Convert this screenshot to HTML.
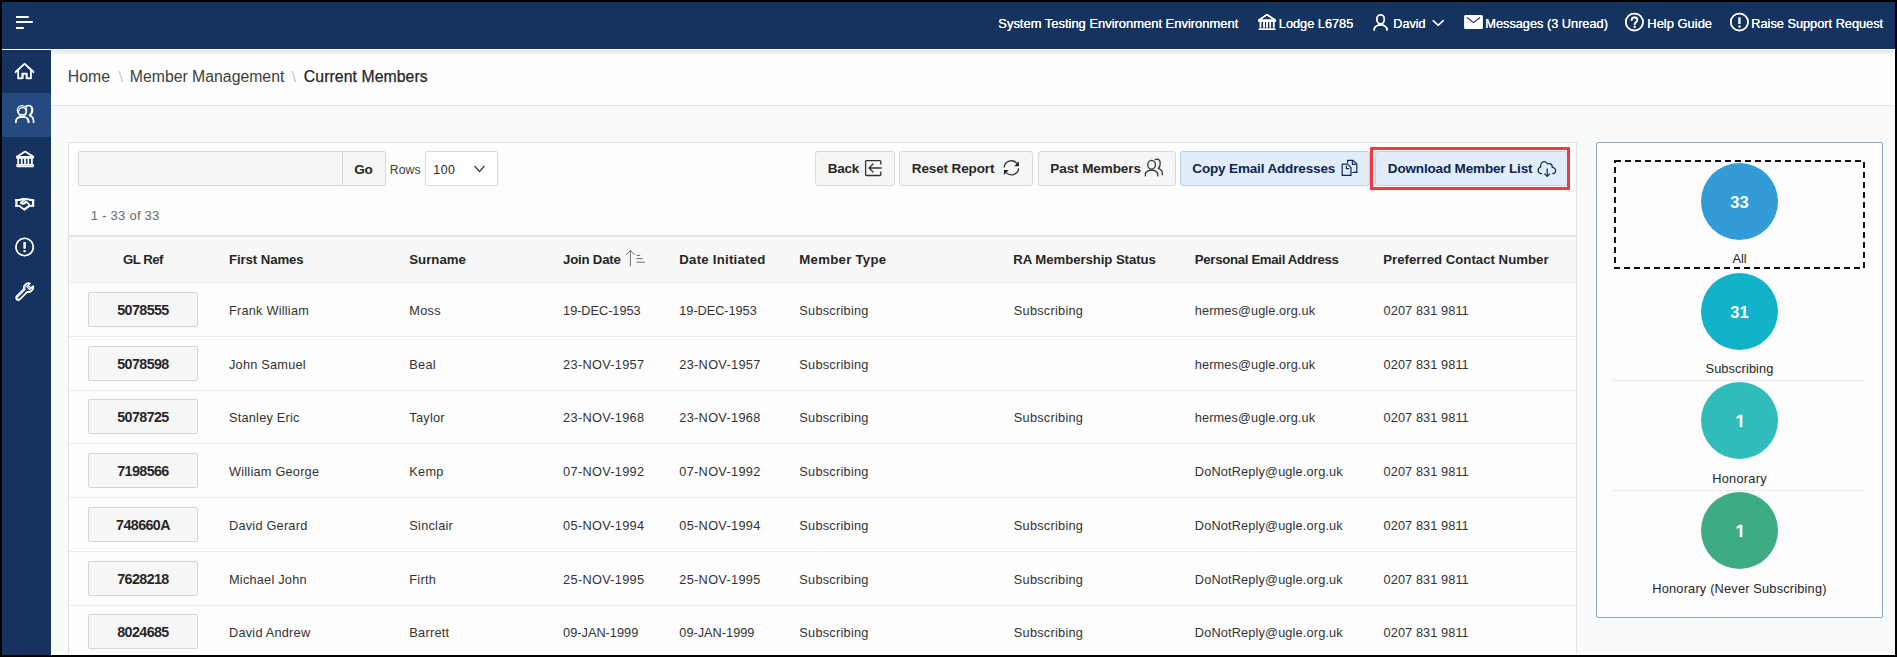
<!DOCTYPE html>
<html><head><meta charset="utf-8"><title>Current Members</title>
<style>
html,body{margin:0;padding:0;}
body{width:1897px;height:657px;position:relative;overflow:hidden;background:#000;font-family:"Liberation Sans",sans-serif;}
.t{position:absolute;line-height:0;white-space:nowrap;}
.r{position:absolute;box-sizing:border-box;}
svg{position:absolute;overflow:visible;}
</style></head><body>
<div class="r" style="left:2px;top:2px;width:1893px;height:653px;background:#f9fafc;"></div>
<div class="r" style="left:2px;top:2px;width:1893px;height:47px;background:#14335e;"></div>
<div class="r" style="left:2px;top:49px;width:1893px;height:1px;background:#ffffff;"></div>
<div class="r" style="left:2px;top:50px;width:49px;height:605px;background:#14335e;"></div>
<div class="r" style="left:2px;top:93px;width:49px;height:44px;background:#244a7f;"></div>
<div class="r" style="left:51px;top:50px;width:1px;height:605px;background:#ffffff;"></div>
<div class="r" style="left:52px;top:50px;width:1843px;height:55px;background:#fefefe;"></div>
<div class="r" style="left:52px;top:50px;width:1843px;height:6px;background:linear-gradient(#e4e5e8,rgba(254,254,254,0));"></div>
<div class="r" style="left:52px;top:105px;width:1843px;height:1px;background:#e4e5e8;"></div>
<svg style="left:0;top:0" width="60" height="40"><g stroke="#fff" stroke-width="2.2" stroke-linecap="round"><line x1="17" y1="17" x2="27.7" y2="17"/><line x1="17" y1="22" x2="31.7" y2="22"/><line x1="17" y1="28" x2="22.7" y2="28"/></g></svg>
<div class="t" style="left:998.3px;top:23.51px;font-size:12.95px;color:#ffffff;">System Testing Environment Environment</div>
<div class="t" style="left:1278.8px;top:23.58px;font-size:12.75px;color:#ffffff;">Lodge L6785</div>
<div class="t" style="left:1393.3px;top:23.63px;font-size:12.6px;color:#ffffff;">David</div>
<div class="t" style="left:1485.3px;top:23.58px;font-size:12.75px;color:#ffffff;">Messages (3 Unread)</div>
<div class="t" style="left:1647.3px;top:23.51px;font-size:12.95px;color:#ffffff;">Help Guide</div>
<div class="t" style="left:1751.3px;top:23.58px;font-size:12.75px;color:#ffffff;">Raise Support Request</div>
<svg style="left:0;top:0" width="1897" height="50"><g fill="none" stroke="#fff" stroke-width="1.5" stroke-linejoin="round" stroke-linecap="round">
<path d="M1258.8 20.2 L1267 14.6 L1275.3 20.2 Z"/>
<line x1="1258.8" y1="21" x2="1275.3" y2="21"/>
<line x1="1260.5" y1="22" x2="1260.5" y2="27"/><line x1="1264" y1="22" x2="1264" y2="27"/><line x1="1267" y1="22" x2="1267" y2="27"/><line x1="1270.3" y1="22" x2="1270.3" y2="27"/><line x1="1273.7" y1="22" x2="1273.7" y2="27"/>
<line x1="1259.3" y1="29.2" x2="1274.8" y2="29.2"/>
<ellipse cx="1380.6" cy="19.3" rx="3.8" ry="4.6"/>
<path d="M1374.3 30 L1374.3 28.8 C1374.3 27.2 1375.6 26.2 1378.2 25.1 L1383 25.1 C1385.6 26.2 1386.9 27.2 1386.9 28.8 L1386.9 30"/>
<path d="M1433.2 20.7 L1438.2 25.3 L1443.2 20.7" stroke-width="1.3"/>
<circle cx="1634.4" cy="22" r="8.6"/>
<circle cx="1739.4" cy="22" r="8.6"/>
</g>
<rect x="1464.3" y="15" width="18.4" height="14" rx="1.5" fill="#fff"/>
<path d="M1467 17.5 L1473.5 22.6 L1480 17.5" fill="none" stroke="#14335e" stroke-width="1.2"/>
<path d="M1631.6 20.2 C1631.6 18.2 1633 17.4 1634.5 17.4 C1636.2 17.4 1637.4 18.5 1637.4 20 C1637.4 22 1634.6 22.2 1634.6 24.6" fill="none" stroke="#fff" stroke-width="1.6" stroke-linecap="round"/>
<circle cx="1634.6" cy="27" r="1" fill="#fff"/>
<rect x="1738.5" y="17.5" width="1.9" height="6.5" fill="#fff"/>
<circle cx="1739.5" cy="26.6" r="1.05" fill="#fff"/>
</svg>
<svg style="left:0;top:0" width="60" height="320"><g fill="none" stroke="#fff" stroke-width="1.35" stroke-linejoin="round" stroke-linecap="round">
<path d="M15.6 71.6 L24.6 63.6 L33.6 71.6"/>
<path d="M18.4 69.4 L18.4 78.2 L23 78.2 L23 73.8 L26.3 73.8 L26.3 78.2 L30.9 78.2 L30.9 69.4"/>
<ellipse cx="22.4" cy="112" rx="3.9" ry="4.5"/>
<path d="M16 122.6 L16 121 C16 119.2 17.6 118 20.2 117.2 L24.8 117.2 C27.4 118 28.8 119.2 28.8 121 L28.8 122.6"/>
<path d="M26 106.6 C26.8 105.9 27.7 105.6 28.6 105.6 C30.7 105.6 31.8 107.7 31.8 110.2 C31.8 112.6 30.8 114.4 29.4 115.6 C31.7 116.6 33.4 117.9 33.4 120.4 L33.4 122.6"/>
<path d="M16.6 156.6 L25.2 151.4 L33.6 156.6 Z"/>
<line x1="18.1" y1="157.6" x2="18.1" y2="163.6"/><line x1="21.5" y1="157.6" x2="21.5" y2="163.6"/><line x1="25.1" y1="157.6" x2="25.1" y2="163.6"/><line x1="28.5" y1="157.6" x2="28.5" y2="163.6"/><line x1="32" y1="157.6" x2="32" y2="163.6"/>
<rect x="17" y="164.6" width="16.4" height="2" rx="0.5"/>
<path d="M15.6 200.4 L20 200.4 L22 198.8 L28 198.8 L30 200.4 L33.8 200.4"/>
<path d="M16.8 200.4 L16.8 205.6 M32.6 200.4 L32.6 205.6"/>
<path d="M15.6 205.8 L19.5 205.8 L24 209.4 L28.5 205.8 L33.8 205.8"/>
<path d="M25.6 199.4 L21.6 202.9 C22.6 204.4 24 204.3 25 203.3 L26.6 201.8 L29.6 204.8"/>
<circle cx="24.6" cy="247" r="8.6"/>
<path d="M30.2 283.3 L26.8 286.6 L29.6 289.4 L33 286 C33.6 289.5 31 293 27 292.3 L20 299.3 C19 300.3 17.5 300.3 16.6 299.4 C15.7 298.5 15.7 297 16.7 296 L23.6 289 C22.9 285 26.5 282.4 30.2 283.3 Z"/>
</g>
<rect x="23.6" y="242" width="2" height="6.5" fill="#fff"/>
<circle cx="24.6" cy="251.2" r="1.1" fill="#fff"/>
</svg>
<div class="r" style="left:52px;top:50px;width:1843px;height:55px;background:#fefefe;"></div>
<div class="r" style="left:52px;top:50px;width:1843px;height:6px;background:linear-gradient(#e4e5e8,rgba(254,254,254,0));"></div>
<div class="r" style="left:52px;top:105px;width:1843px;height:1px;background:#e4e5e8;"></div>
<svg style="left:0;top:0" width="60" height="40"><g stroke="#fff" stroke-width="2.2" stroke-linecap="round"><line x1="17" y1="17" x2="27.7" y2="17"/><line x1="17" y1="22" x2="31.7" y2="22"/><line x1="17" y1="28" x2="22.7" y2="28"/></g></svg>
<div class="t" style="left:998.3px;top:23.51px;font-size:12.95px;color:#ffffff;">System Testing Environment Environment</div>
<div class="t" style="left:1278.8px;top:23.58px;font-size:12.75px;color:#ffffff;">Lodge L6785</div>
<div class="t" style="left:1393.3px;top:23.63px;font-size:12.6px;color:#ffffff;">David</div>
<div class="t" style="left:1485.3px;top:23.58px;font-size:12.75px;color:#ffffff;">Messages (3 Unread)</div>
<div class="t" style="left:1647.3px;top:23.51px;font-size:12.95px;color:#ffffff;">Help Guide</div>
<div class="t" style="left:1751.3px;top:23.58px;font-size:12.75px;color:#ffffff;">Raise Support Request</div>
<svg style="left:0;top:0" width="1897" height="50"><g fill="none" stroke="#fff" stroke-width="1.5" stroke-linejoin="round" stroke-linecap="round">
<path d="M1258.8 20.2 L1267 14.6 L1275.3 20.2 Z"/>
<line x1="1258.8" y1="21" x2="1275.3" y2="21"/>
<line x1="1260.5" y1="22" x2="1260.5" y2="27"/><line x1="1264" y1="22" x2="1264" y2="27"/><line x1="1267" y1="22" x2="1267" y2="27"/><line x1="1270.3" y1="22" x2="1270.3" y2="27"/><line x1="1273.7" y1="22" x2="1273.7" y2="27"/>
<line x1="1259.3" y1="29.2" x2="1274.8" y2="29.2"/>
<ellipse cx="1380.6" cy="19.3" rx="3.8" ry="4.6"/>
<path d="M1374.3 30 L1374.3 28.8 C1374.3 27.2 1375.6 26.2 1378.2 25.1 L1383 25.1 C1385.6 26.2 1386.9 27.2 1386.9 28.8 L1386.9 30"/>
<path d="M1433.2 20.7 L1438.2 25.3 L1443.2 20.7" stroke-width="1.3"/>
<circle cx="1634.4" cy="22" r="8.6"/>
<circle cx="1739.4" cy="22" r="8.6"/>
</g>
<rect x="1464.3" y="15" width="18.4" height="14" rx="1.5" fill="#fff"/>
<path d="M1467 17.5 L1473.5 22.6 L1480 17.5" fill="none" stroke="#14335e" stroke-width="1.2"/>
<path d="M1631.6 20.2 C1631.6 18.2 1633 17.4 1634.5 17.4 C1636.2 17.4 1637.4 18.5 1637.4 20 C1637.4 22 1634.6 22.2 1634.6 24.6" fill="none" stroke="#fff" stroke-width="1.6" stroke-linecap="round"/>
<circle cx="1634.6" cy="27" r="1" fill="#fff"/>
<rect x="1738.5" y="17.5" width="1.9" height="6.5" fill="#fff"/>
<circle cx="1739.5" cy="26.6" r="1.05" fill="#fff"/>
</svg>
<svg style="left:0;top:0" width="60" height="320"><g fill="none" stroke="#fff" stroke-width="1.35" stroke-linejoin="round" stroke-linecap="round">
<path d="M15.5 72.5 L24.5 64 L33.5 72.5"/>
<path d="M18 70.5 L18 78.5 L22 78.5 L22 73.5 L27 73.5 L27 78.5 L31 78.5 L31 70.5"/>
<circle cx="22" cy="110.2" r="4.6"/>
<path d="M15.8 122.3 C15.8 118.3 18.5 116.3 22 116.3 C25.5 116.3 28.2 118.3 28.2 122.3"/>
<path d="M26.5 106.1 C27.2 105.6 27.8 105.4 28.6 105.4 C31.2 105.4 32.7 107.6 32.7 110 C32.7 112.3 31.4 114.2 29.6 114.8 C31.8 115.6 33.8 117.8 33.8 122.3"/>
<path d="M16.8 157 L25 151.6 L33.2 157 Z"/>
<line x1="16.8" y1="158" x2="33.2" y2="158"/>
<line x1="18.4" y1="159" x2="18.4" y2="164"/><line x1="21.8" y1="159" x2="21.8" y2="164"/><line x1="25" y1="159" x2="25" y2="164"/><line x1="28.2" y1="159" x2="28.2" y2="164"/><line x1="31.6" y1="159" x2="31.6" y2="164"/>
<line x1="17.2" y1="166" x2="32.8" y2="166"/>
<path d="M15.5 200 L20 199.5 L24 198.5 L26 199.5 L30 199.5 L33.5 200"/>
<path d="M16 200 L16 206 M33.5 200 L33.5 206"/>
<path d="M16 206 L19 206 L24.5 210 L30 206 L33.5 206"/>
<path d="M24 198.8 L20.5 203 C21.5 204 22.8 204 24 203 L26 201.5 L29.5 205"/>
<circle cx="24.6" cy="247" r="8.8"/>
<path d="M16.5 298 L25 289.5 C24 286.5 25.5 283.5 28.8 282.8 L28.5 285.8 L30.8 287.8 L33.5 286.5 C33.8 289.8 30.8 292 27.5 291.5 L19 300 Z"/>
</g>
<rect x="23.6" y="242" width="2" height="6.5" fill="#fff"/>
<circle cx="24.6" cy="251.2" r="1.1" fill="#fff"/>
</svg>
<div class="t" style="left:67.8px;top:76.73px;font-size:15.8px;color:#404040;">Home</div>
<div class="t" style="left:118.8px;top:76.80px;font-size:15px;color:#c4c4c4;">\</div>
<div class="t" style="left:129.8px;top:76.73px;font-size:15.8px;color:#404040;">Member Management</div>
<div class="t" style="left:291.8px;top:76.80px;font-size:15px;color:#c4c4c4;">\</div>
<div class="t" style="left:303.8px;top:76.73px;font-size:15.8px;color:#262626;letter-spacing:0.07px;-webkit-text-stroke:0.25px #262626;">Current Members</div>
<div class="r" style="left:68px;top:142px;width:1509px;height:520px;background:#fdfdfd;border:1px solid #e2e2e2;"></div>
<div class="r" style="left:78px;top:151px;width:265px;height:35px;background:#f6f6f6;border:1px solid #d9d9d9;border-radius:2px 0 0 2px;"></div>
<div class="r" style="left:342px;top:151px;width:44px;height:35px;background:#f6f6f6;border:1px solid #d9d9d9;border-radius:0 2px 2px 0;"></div>
<div class="t" style="left:354.3px;top:169.59px;font-size:13.6px;font-weight:700;color:#262626;letter-spacing:-0.3px;">Go</div>
<div class="t" style="left:389.8px;top:170.04px;font-size:12.3px;color:#404040;">Rows</div>
<div class="r" style="left:425px;top:151px;width:73px;height:35px;background:#fff;border:1px solid #d9d9d9;border-radius:2px;"></div>
<div class="t" style="left:433.3px;top:170.00px;font-size:12.4px;color:#262626;letter-spacing:0.5px;">100</div>
<svg style="left:0;top:0" width="520" height="200"><path d="M474.5 166 L479.5 171.5 L484.5 166" fill="none" stroke="#404040" stroke-width="1.3"/></svg>
<div class="t" style="left:90.8px;top:215.50px;font-size:13px;color:#6b6b6b;letter-spacing:0.25px;">1 - 33 of 33</div>
<div class="r" style="left:815px;top:151px;width:80px;height:35px;background:#f6f6f6;border:1px solid #dadada;border-radius:3px;"></div>
<div class="t" style="left:827.8px;top:168.62px;font-size:13.5px;font-weight:700;color:#262626;letter-spacing:-0.3px;">Back</div>
<div class="r" style="left:899px;top:151px;width:134px;height:35px;background:#f6f6f6;border:1px solid #dadada;border-radius:3px;"></div>
<div class="t" style="left:911.8px;top:168.62px;font-size:13.5px;font-weight:700;color:#262626;letter-spacing:-0.12px;">Reset Report</div>
<div class="r" style="left:1038px;top:151px;width:138px;height:35px;background:#f6f6f6;border:1px solid #dadada;border-radius:3px;"></div>
<div class="t" style="left:1050.3px;top:168.62px;font-size:13.5px;font-weight:700;color:#262626;letter-spacing:-0.08px;">Past Members</div>
<div class="r" style="left:1180px;top:151px;width:190px;height:35px;background:#e2ecfa;border:1px solid #bfcde2;border-radius:3px;"></div>
<div class="t" style="left:1192.3px;top:168.62px;font-size:13.5px;font-weight:700;color:#0b2650;letter-spacing:-0.15px;">Copy Email Addresses</div>
<div class="r" style="left:1375px;top:151px;width:193px;height:35px;background:#e2ecfa;border:1px solid #bfcde2;border-radius:3px;"></div>
<div class="t" style="left:1387.8px;top:168.62px;font-size:13.5px;font-weight:700;color:#0b2650;letter-spacing:-0.16px;">Download Member List</div>
<div class="r" style="left:1370px;top:147px;width:200px;height:43px;border:3px solid #f23a40;"></div>
<svg style="left:0;top:0" width="1600" height="200"><g fill="none" stroke="#333" stroke-width="1.3" stroke-linecap="round" stroke-linejoin="round">
<path d="M880.8 164 L880.8 161.5 Q880.8 160.6 879.9 160.6 L866.5 160.6 Q865.6 160.6 865.6 161.5 L865.6 174.6 Q865.6 175.5 866.5 175.5 L879.9 175.5 Q880.8 175.5 880.8 174.6 L880.8 172"/>
<path d="M881.2 168 L869 168 M873 164 L869 168 L873 172"/>
<path d="M1004.2 167 A7.3 7.3 0 0 1 1016.6 163" />
<path d="M1018.6 169 A7.3 7.3 0 0 1 1006.2 172.6" />
<ellipse cx="1151.6" cy="164.8" rx="3.8" ry="4.4"/>
<path d="M1145.3 175.8 L1145.3 174.2 C1145.3 172.6 1146.6 171.4 1149.2 170.4 L1154 170.4 C1156.6 171.4 1157.8 172.6 1157.8 174.2 L1157.8 175.8"/>
<path d="M1155.2 159.6 C1155.8 159.2 1156.4 159.1 1157 159.1 C1159 159.1 1160.2 161 1160.2 163.4 C1160.2 165.6 1159.4 167.3 1158.3 168.4 C1160.6 169.4 1162.3 170.6 1162.3 172.8 L1162.3 174.8"/>
</g>
<path d="M1018.9 161.2 L1018.9 166.2 L1014.2 166.2 Z M1003.9 170 L1008.6 170 L1003.9 175 Z" fill="#222"/>
<g fill="none" stroke="#0b2650" stroke-width="1.2" stroke-linejoin="round" stroke-linecap="round">
<path d="M1347.6 164.2 L1342.2 164.2 L1342.2 175.4 L1351 175.4 L1351 167.6 L1347.6 164.2"/>
<path d="M1346.4 166 L1346.4 168.6 L1348.8 168.6"/>
<path d="M1347.6 162.6 L1347.6 160.4 L1353 160.4 L1356.8 164 L1356.8 172.4 L1353 172.4"/>
<path d="M1352.4 161.6 L1352.4 164.4 L1355.2 164.4"/>
<path d="M1541.6 173.6 C1539.6 173.6 1538.2 172.2 1538.2 170.2 C1538.2 168.4 1539.2 167.4 1540.6 167 C1540.4 163.6 1542 161.6 1544.2 161.6 C1546 161.6 1547 162.8 1547.6 164 C1548.2 163.6 1549 163.4 1549.8 163.6 C1551.6 164 1552.4 165.8 1552.2 167.4 C1554.2 167.6 1555.6 169 1555.6 170.8 C1555.6 172.4 1554.4 173.6 1552.8 173.6"/>
<path d="M1547.2 168.8 L1547.2 176.4 M1544.6 173.8 L1547.2 176.4 L1549.8 173.8"/>
</g>
</svg>
<div class="r" style="left:69px;top:235px;width:1507px;height:2px;background:#e5e5e5;"></div>
<div class="r" style="left:69px;top:237px;width:1507px;height:46px;background:#f8f8f8;border-bottom:1px solid #ececec;"></div>
<div class="t" style="left:143px;top:259.63px;font-size:13.2px;font-weight:700;color:#262626;letter-spacing:-0.49px;transform:translateX(-50%);">GL Ref</div>
<div class="t" style="left:229.0px;top:259.63px;font-size:13.2px;font-weight:700;color:#262626;letter-spacing:-0.08px;">First Names</div>
<div class="t" style="left:409.3px;top:259.63px;font-size:13.2px;font-weight:700;color:#262626;letter-spacing:0.03px;">Surname</div>
<div class="t" style="left:563.1px;top:259.63px;font-size:13.2px;font-weight:700;color:#262626;letter-spacing:-0.2px;">Join Date</div>
<div class="t" style="left:679.3px;top:259.63px;font-size:13.2px;font-weight:700;color:#262626;letter-spacing:0.25px;">Date Initiated</div>
<div class="t" style="left:799.3px;top:259.63px;font-size:13.2px;font-weight:700;color:#262626;letter-spacing:0.28px;">Member Type</div>
<div class="t" style="left:1013.3px;top:259.63px;font-size:13.2px;font-weight:700;color:#262626;letter-spacing:-0.07px;">RA Membership Status</div>
<div class="t" style="left:1194.8px;top:259.63px;font-size:13.2px;font-weight:700;color:#262626;letter-spacing:-0.31px;">Personal Email Address</div>
<div class="t" style="left:1383.3px;top:259.63px;font-size:13.2px;font-weight:700;color:#262626;letter-spacing:0.015px;">Preferred Contact Number</div>
<svg style="left:0;top:0" width="700" height="300"><g fill="none" stroke="#707070" stroke-width="1" stroke-linecap="round"><path d="M630.4 266 L630.4 250.6 M626.4 254.6 L630.4 250.6 L634.4 254.6"/><path d="M636.9 255.4 L639.8 255.4 M636.9 258.6 L642.3 258.6 M636.9 262.2 L644.5 262.2"/></g></svg>
<div class="r" style="left:69px;top:336px;width:1507px;height:1px;background:#ececec;"></div>
<div class="r" style="left:88px;top:292px;width:110px;height:35px;background:#f7f7f7;border:1px solid #d6d6d6;border-radius:2px;"></div>
<div class="t" style="left:143px;top:310.25px;font-size:14.3px;font-weight:700;color:#262626;letter-spacing:-0.6px;transform:translateX(-50%);">5078555</div>
<div class="t" style="left:229.0px;top:310.58px;font-size:12.75px;color:#333333;letter-spacing:0.22px;">Frank William</div>
<div class="t" style="left:409.3px;top:310.58px;font-size:12.75px;color:#333333;letter-spacing:0.25px;">Moss</div>
<div class="t" style="left:563.1px;top:310.58px;font-size:12.75px;color:#333333;letter-spacing:-0.05px;">19-DEC-1953</div>
<div class="t" style="left:679.3px;top:310.58px;font-size:12.75px;color:#333333;letter-spacing:-0.05px;">19-DEC-1953</div>
<div class="t" style="left:799.3px;top:310.58px;font-size:12.75px;color:#333333;letter-spacing:0.25px;">Subscribing</div>
<div class="t" style="left:1013.8px;top:310.58px;font-size:12.75px;color:#333333;letter-spacing:0.25px;">Subscribing</div>
<div class="t" style="left:1194.8px;top:310.58px;font-size:12.75px;color:#333333;letter-spacing:0.1px;">hermes@ugle.org.uk</div>
<div class="t" style="left:1383.6px;top:310.58px;font-size:12.75px;color:#333333;letter-spacing:0.08px;">0207 831 9811</div>
<div class="r" style="left:69px;top:390px;width:1507px;height:1px;background:#ececec;"></div>
<div class="r" style="left:88px;top:346px;width:110px;height:35px;background:#f7f7f7;border:1px solid #d6d6d6;border-radius:2px;"></div>
<div class="t" style="left:143px;top:364.25px;font-size:14.3px;font-weight:700;color:#262626;letter-spacing:-0.6px;transform:translateX(-50%);">5078598</div>
<div class="t" style="left:229.0px;top:364.58px;font-size:12.75px;color:#333333;letter-spacing:0.22px;">John Samuel</div>
<div class="t" style="left:409.3px;top:364.58px;font-size:12.75px;color:#333333;letter-spacing:0.25px;">Beal</div>
<div class="t" style="left:563.1px;top:364.58px;font-size:12.75px;color:#333333;letter-spacing:0.3px;">23-NOV-1957</div>
<div class="t" style="left:679.3px;top:364.58px;font-size:12.75px;color:#333333;letter-spacing:0.3px;">23-NOV-1957</div>
<div class="t" style="left:799.3px;top:364.58px;font-size:12.75px;color:#333333;letter-spacing:0.25px;">Subscribing</div>
<div class="t" style="left:1194.8px;top:364.58px;font-size:12.75px;color:#333333;letter-spacing:0.1px;">hermes@ugle.org.uk</div>
<div class="t" style="left:1383.6px;top:364.58px;font-size:12.75px;color:#333333;letter-spacing:0.08px;">0207 831 9811</div>
<div class="r" style="left:69px;top:443px;width:1507px;height:1px;background:#ececec;"></div>
<div class="r" style="left:88px;top:399px;width:110px;height:35px;background:#f7f7f7;border:1px solid #d6d6d6;border-radius:2px;"></div>
<div class="t" style="left:143px;top:417.25px;font-size:14.3px;font-weight:700;color:#262626;letter-spacing:-0.6px;transform:translateX(-50%);">5078725</div>
<div class="t" style="left:229.0px;top:417.58px;font-size:12.75px;color:#333333;letter-spacing:0.22px;">Stanley Eric</div>
<div class="t" style="left:409.3px;top:417.58px;font-size:12.75px;color:#333333;letter-spacing:0.25px;">Taylor</div>
<div class="t" style="left:563.1px;top:417.58px;font-size:12.75px;color:#333333;letter-spacing:0.3px;">23-NOV-1968</div>
<div class="t" style="left:679.3px;top:417.58px;font-size:12.75px;color:#333333;letter-spacing:0.3px;">23-NOV-1968</div>
<div class="t" style="left:799.3px;top:417.58px;font-size:12.75px;color:#333333;letter-spacing:0.25px;">Subscribing</div>
<div class="t" style="left:1013.8px;top:417.58px;font-size:12.75px;color:#333333;letter-spacing:0.25px;">Subscribing</div>
<div class="t" style="left:1194.8px;top:417.58px;font-size:12.75px;color:#333333;letter-spacing:0.1px;">hermes@ugle.org.uk</div>
<div class="t" style="left:1383.6px;top:417.58px;font-size:12.75px;color:#333333;letter-spacing:0.08px;">0207 831 9811</div>
<div class="r" style="left:69px;top:497px;width:1507px;height:1px;background:#ececec;"></div>
<div class="r" style="left:88px;top:453px;width:110px;height:35px;background:#f7f7f7;border:1px solid #d6d6d6;border-radius:2px;"></div>
<div class="t" style="left:143px;top:471.25px;font-size:14.3px;font-weight:700;color:#262626;letter-spacing:-0.6px;transform:translateX(-50%);">7198566</div>
<div class="t" style="left:229.0px;top:471.58px;font-size:12.75px;color:#333333;letter-spacing:0.22px;">William George</div>
<div class="t" style="left:409.3px;top:471.58px;font-size:12.75px;color:#333333;letter-spacing:0.25px;">Kemp</div>
<div class="t" style="left:563.1px;top:471.58px;font-size:12.75px;color:#333333;letter-spacing:0.3px;">07-NOV-1992</div>
<div class="t" style="left:679.3px;top:471.58px;font-size:12.75px;color:#333333;letter-spacing:0.3px;">07-NOV-1992</div>
<div class="t" style="left:799.3px;top:471.58px;font-size:12.75px;color:#333333;letter-spacing:0.25px;">Subscribing</div>
<div class="t" style="left:1194.8px;top:471.58px;font-size:12.75px;color:#333333;letter-spacing:0.15px;">DoNotReply@ugle.org.uk</div>
<div class="t" style="left:1383.6px;top:471.58px;font-size:12.75px;color:#333333;letter-spacing:0.08px;">0207 831 9811</div>
<div class="r" style="left:69px;top:551px;width:1507px;height:1px;background:#ececec;"></div>
<div class="r" style="left:88px;top:507px;width:110px;height:35px;background:#f7f7f7;border:1px solid #d6d6d6;border-radius:2px;"></div>
<div class="t" style="left:143px;top:525.25px;font-size:14.3px;font-weight:700;color:#262626;letter-spacing:-0.6px;transform:translateX(-50%);">748660A</div>
<div class="t" style="left:229.0px;top:525.58px;font-size:12.75px;color:#333333;letter-spacing:0.22px;">David Gerard</div>
<div class="t" style="left:409.3px;top:525.58px;font-size:12.75px;color:#333333;letter-spacing:0.25px;">Sinclair</div>
<div class="t" style="left:563.1px;top:525.58px;font-size:12.75px;color:#333333;letter-spacing:0.3px;">05-NOV-1994</div>
<div class="t" style="left:679.3px;top:525.58px;font-size:12.75px;color:#333333;letter-spacing:0.3px;">05-NOV-1994</div>
<div class="t" style="left:799.3px;top:525.58px;font-size:12.75px;color:#333333;letter-spacing:0.25px;">Subscribing</div>
<div class="t" style="left:1013.8px;top:525.58px;font-size:12.75px;color:#333333;letter-spacing:0.25px;">Subscribing</div>
<div class="t" style="left:1194.8px;top:525.58px;font-size:12.75px;color:#333333;letter-spacing:0.15px;">DoNotReply@ugle.org.uk</div>
<div class="t" style="left:1383.6px;top:525.58px;font-size:12.75px;color:#333333;letter-spacing:0.08px;">0207 831 9811</div>
<div class="r" style="left:69px;top:605px;width:1507px;height:1px;background:#ececec;"></div>
<div class="r" style="left:88px;top:561px;width:110px;height:35px;background:#f7f7f7;border:1px solid #d6d6d6;border-radius:2px;"></div>
<div class="t" style="left:143px;top:579.25px;font-size:14.3px;font-weight:700;color:#262626;letter-spacing:-0.6px;transform:translateX(-50%);">7628218</div>
<div class="t" style="left:229.0px;top:579.58px;font-size:12.75px;color:#333333;letter-spacing:0.22px;">Michael John</div>
<div class="t" style="left:409.3px;top:579.58px;font-size:12.75px;color:#333333;letter-spacing:0.25px;">Firth</div>
<div class="t" style="left:563.1px;top:579.58px;font-size:12.75px;color:#333333;letter-spacing:0.3px;">25-NOV-1995</div>
<div class="t" style="left:679.3px;top:579.58px;font-size:12.75px;color:#333333;letter-spacing:0.3px;">25-NOV-1995</div>
<div class="t" style="left:799.3px;top:579.58px;font-size:12.75px;color:#333333;letter-spacing:0.25px;">Subscribing</div>
<div class="t" style="left:1013.8px;top:579.58px;font-size:12.75px;color:#333333;letter-spacing:0.25px;">Subscribing</div>
<div class="t" style="left:1194.8px;top:579.58px;font-size:12.75px;color:#333333;letter-spacing:0.15px;">DoNotReply@ugle.org.uk</div>
<div class="t" style="left:1383.6px;top:579.58px;font-size:12.75px;color:#333333;letter-spacing:0.08px;">0207 831 9811</div>
<div class="r" style="left:69px;top:658px;width:1507px;height:1px;background:#ececec;"></div>
<div class="r" style="left:88px;top:614px;width:110px;height:35px;background:#f7f7f7;border:1px solid #d6d6d6;border-radius:2px;"></div>
<div class="t" style="left:143px;top:632.25px;font-size:14.3px;font-weight:700;color:#262626;letter-spacing:-0.6px;transform:translateX(-50%);">8024685</div>
<div class="t" style="left:229.0px;top:632.58px;font-size:12.75px;color:#333333;letter-spacing:0.22px;">David Andrew</div>
<div class="t" style="left:409.3px;top:632.58px;font-size:12.75px;color:#333333;letter-spacing:0.25px;">Barrett</div>
<div class="t" style="left:563.1px;top:632.58px;font-size:12.75px;color:#333333;">09-JAN-1999</div>
<div class="t" style="left:679.3px;top:632.58px;font-size:12.75px;color:#333333;">09-JAN-1999</div>
<div class="t" style="left:799.3px;top:632.58px;font-size:12.75px;color:#333333;letter-spacing:0.25px;">Subscribing</div>
<div class="t" style="left:1013.8px;top:632.58px;font-size:12.75px;color:#333333;letter-spacing:0.25px;">Subscribing</div>
<div class="t" style="left:1194.8px;top:632.58px;font-size:12.75px;color:#333333;letter-spacing:0.15px;">DoNotReply@ugle.org.uk</div>
<div class="t" style="left:1383.6px;top:632.58px;font-size:12.75px;color:#333333;letter-spacing:0.08px;">0207 831 9811</div>
<div class="r" style="left:1596px;top:142px;width:287px;height:476px;background:#fdfdfd;border:1px solid #8ea6c4;border-radius:2px;"></div>
<svg style="left:0;top:0" width="1897" height="657"><rect x="1615" y="161" width="249" height="107" fill="none" stroke="#111" stroke-width="2" stroke-dasharray="6 4"/></svg>
<div class="r" style="left:1613px;top:380px;width:251px;height:1px;background:#eaeaea;"></div>
<div class="r" style="left:1613px;top:490px;width:251px;height:1px;background:#eaeaea;"></div>
<div class="r" style="left:1701px;top:162.5px;width:77px;height:77px;background:#349bd9;border-radius:50%;"></div>
<div class="t" style="left:1739.5px;top:202.28px;font-size:16.5px;font-weight:700;color:#fff;transform:translateX(-50%);">33</div>
<div class="t" style="left:1739.5px;top:259.06px;font-size:12.8px;color:#262626;transform:translateX(-50%);">All</div>
<div class="r" style="left:1701px;top:272.5px;width:77px;height:77px;background:#13b2cb;border-radius:50%;"></div>
<div class="t" style="left:1739.5px;top:312.28px;font-size:16.5px;font-weight:700;color:#fff;transform:translateX(-50%);">31</div>
<div class="t" style="left:1739.5px;top:368.86px;font-size:12.8px;color:#262626;letter-spacing:0.1px;transform:translateX(-50%);">Subscribing</div>
<div class="r" style="left:1701px;top:382.0px;width:77px;height:77px;background:#2fbcbb;border-radius:50%;"></div>
<svg style="left:0;top:0" width="1897" height="657"><path d="M1739.7 414.70 L1742.4 414.70 L1742.4 426.90 L1739.7 426.90 L1739.7 417.30 L1736.6 419.10 L1736.6 416.80 Z" fill="#fff"/></svg>
<div class="t" style="left:1739.5px;top:478.86px;font-size:12.8px;color:#262626;letter-spacing:0.25px;transform:translateX(-50%);">Honorary</div>
<div class="r" style="left:1701px;top:492.0px;width:77px;height:77px;background:#3dac82;border-radius:50%;"></div>
<svg style="left:0;top:0" width="1897" height="657"><path d="M1739.7 524.70 L1742.4 524.70 L1742.4 536.90 L1739.7 536.90 L1739.7 527.30 L1736.6 529.10 L1736.6 526.80 Z" fill="#fff"/></svg>
<div class="t" style="left:1739.5px;top:588.56px;font-size:12.8px;color:#262626;letter-spacing:0.18px;transform:translateX(-50%);">Honorary (Never Subscribing)</div>
<div class="r" style="left:1894px;top:49px;width:1px;height:606px;background:#fff;"></div>
<div class="r" style="left:51px;top:654px;width:1844px;height:1px;background:#fff;"></div>
<div class="r" style="left:0px;top:655px;width:1897px;height:2px;background:#000;"></div>
<div class="r" style="left:1895px;top:0px;width:2px;height:657px;background:#000;"></div>
</body></html>
